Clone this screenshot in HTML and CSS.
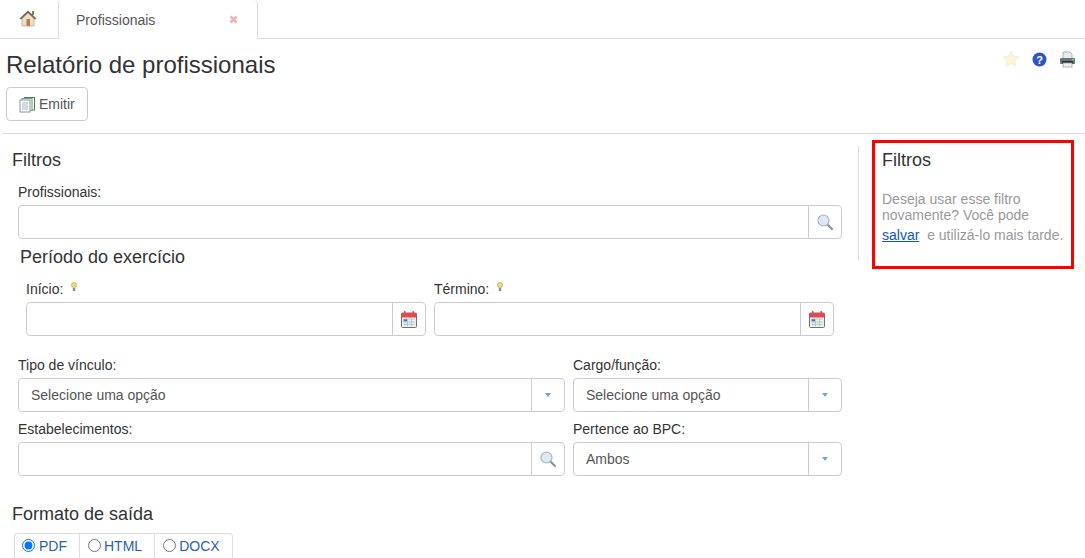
FILE: index.html
```html
<!DOCTYPE html>
<html lang="pt-BR">
<head>
  <meta charset="UTF-8" />
  <title>Relatório de profissionais</title>
  <link rel="stylesheet" href="styles.css">
</head>
<body>
  <div class="tabs">
    <a class="tab-home">
      <svg width="20" height="18" viewBox="0 0 20 18">
        <rect x="14" y="2" width="2" height="4" fill="#8d7b6c"/>
        <path d="M4 9.500 10 4l6 5.500V17H4z" fill="#efe0c8" stroke="#b8a48e" stroke-width=".8"/>
        <path d="M10 1.500 1.500 9.500 3 10.500 10 4l7 6.500 1.500-1z" fill="#77675a"/>
        <rect x="8.500" y="10" width="3.500" height="7" fill="#c07a48"/>
      </svg>
    </a>
    <div class="tab-active">
      <span>Profissionais</span>
      <svg width="9" height="9" viewBox="0 0 9 9">
        <path d="M1.500 1.500l6 6M7.500 1.500l-6 6" stroke="#e8b4b4" stroke-width="2.600"/>
      </svg>
    </div>
  </div>

  <header class="page-head">
    <div>
      <h1>Relatório de profissionais</h1>
      <button class="btn" type="button">
        <svg width="16" height="17" viewBox="0 0 16 17">
          <rect x="5.500" y="1.500" width="10" height="12.500" fill="#f4faf3" stroke="#3f8a4a"/>
          <rect x="3" y="2.500" width="10" height="12" fill="#f6f9f9" stroke="#7d9a8a"/>
          <rect x="1" y="4" width="10" height="12" fill="#fff" stroke="#8a9aa0"/>
          <path d="M3 7h6M3 9h6M3 11h6M3 13h6" stroke="#a9b8c0"/>
        </svg>
        Emitir
      </button>
    </div>
    <div class="head-icons">
      <svg width="18" height="18" viewBox="0 0 18 18">
        <path d="M9 1l2.400 5.300 5.600.6-4.200 3.800 1.200 5.700L9 13.500l-5 2.900 1.200-5.700L1 6.900l5.600-.6z" fill="#f9f5d6" stroke="#efe9c2" stroke-width=".6"/>
      </svg>
      <svg width="15" height="15" viewBox="0 0 15 15">
        <circle cx="7.500" cy="7.500" r="7" fill="#2f55c4"/>
        <text x="7.500" y="11.500" class="help-mark">?</text>
      </svg>
      <svg width="17" height="17" viewBox="0 0 17 17">
        <path d="M4 1h7l2 2v5H4z" fill="#e8ecec" stroke="#9aa4a8" stroke-width=".8"/>
        <rect x="1" y="7" width="15" height="6" rx="1" fill="#6d7478"/>
        <rect x="3" y="10" width="11" height="3" fill="#2b3034"/>
        <rect x="4" y="12" width="9" height="4" fill="#f1f4f4" stroke="#9aa4a8" stroke-width=".8"/>
        <rect x="13" y="8" width="2" height="1.500" fill="#6fd08a"/>
      </svg>
    </div>
  </header>

  <hr class="divider">

  <div class="content">
    <main class="filters">
      <h3>Filtros</h3>
      <div class="fields">
        <div class="field">
          <label>Profissionais:</label>
          <div class="input-group">
            <div class="control"></div>
            <span class="addon">
              <svg width="18" height="18" viewBox="0 0 18 18">
                <path d="M11 11l5 5" stroke="#8f9295" stroke-width="2.200" stroke-linecap="round"/>
                <circle cx="7.500" cy="7.500" r="5.500" fill="#dfe9f3" stroke="#aab3bb" stroke-width="1.200"/>
              </svg>
            </span>
          </div>
        </div>

        <h3 class="period-title">Período do exercício</h3>
        <div class="period">
          <div class="field">
            <label>Início: <svg class="bulb" width="6" height="10" viewBox="0 0 6 10"><circle cx="3" cy="3" r="2.600" fill="#f2d77a" stroke="#b9a45c" stroke-width=".6"/><rect x="1.800" y="6" width="2.400" height="3" fill="#8a8a80"/></svg></label>
            <div class="input-group">
              <div class="control"></div>
              <span class="addon">
                <svg width="16" height="17" viewBox="0 0 16 17">
                  <rect x=".5" y="2" width="15" height="14.500" rx="1" fill="#e8f0ee" stroke="#77706a"/>
                  <rect x=".5" y="2" width="15" height="4.500" rx="1" fill="#e5484d"/>
                  <rect x="3" y="0" width="1.500" height="4" fill="#c9565a"/>
                  <rect x="11.500" y="0" width="1.500" height="4" fill="#c9565a"/>
                  <rect x="2.500" y="8" width="3.500" height="2.500" fill="#4a78c8"/>
                  <path d="M6.500 8v7M10.500 8v7M2.500 11h11M2.500 13.500h11M2.500 8h11" stroke="#a9c2c4" stroke-width=".8"/>
                </svg>
              </span>
            </div>
          </div>
          <div class="field">
            <label>Término: <svg class="bulb" width="6" height="10" viewBox="0 0 6 10"><circle cx="3" cy="3" r="2.600" fill="#f2d77a" stroke="#b9a45c" stroke-width=".6"/><rect x="1.800" y="6" width="2.400" height="3" fill="#8a8a80"/></svg></label>
            <div class="input-group">
              <div class="control"></div>
              <span class="addon">
                <svg width="16" height="17" viewBox="0 0 16 17">
                  <rect x=".5" y="2" width="15" height="14.500" rx="1" fill="#e8f0ee" stroke="#77706a"/>
                  <rect x=".5" y="2" width="15" height="4.500" rx="1" fill="#e5484d"/>
                  <rect x="3" y="0" width="1.500" height="4" fill="#c9565a"/>
                  <rect x="11.500" y="0" width="1.500" height="4" fill="#c9565a"/>
                  <rect x="2.500" y="8" width="3.500" height="2.500" fill="#4a78c8"/>
                  <path d="M6.500 8v7M10.500 8v7M2.500 11h11M2.500 13.500h11M2.500 8h11" stroke="#a9c2c4" stroke-width=".8"/>
                </svg>
              </span>
            </div>
          </div>
        </div>

        <div class="select-grid">
          <div class="field">
            <label>Tipo de vínculo:</label>
            <div class="input-group">
              <div class="control">Selecione uma opção</div>
              <span class="addon"><i class="caret"></i></span>
            </div>
          </div>
          <div class="field">
            <label>Cargo/função:</label>
            <div class="input-group">
              <div class="control">Selecione uma opção</div>
              <span class="addon"><i class="caret"></i></span>
            </div>
          </div>
          <div class="field">
            <label>Estabelecimentos:</label>
            <div class="input-group">
              <div class="control"></div>
              <span class="addon">
                <svg width="18" height="18" viewBox="0 0 18 18">
                  <path d="M11 11l5 5" stroke="#8f9295" stroke-width="2.200" stroke-linecap="round"/>
                  <circle cx="7.500" cy="7.500" r="5.500" fill="#dfe9f3" stroke="#aab3bb" stroke-width="1.200"/>
                </svg>
              </span>
            </div>
          </div>
          <div class="field">
            <label>Pertence ao BPC:</label>
            <div class="input-group">
              <div class="control">Ambos</div>
              <span class="addon"><i class="caret"></i></span>
            </div>
          </div>
        </div>
      </div>

      <h3 class="output-title">Formato de saída</h3>
      <div class="radio-group">
        <label class="radio-item"><input type="radio" name="fmt" checked>PDF</label>
        <label class="radio-item"><input type="radio" name="fmt">HTML</label>
        <label class="radio-item"><input type="radio" name="fmt">DOCX</label>
      </div>
    </main>

    <div class="side-rule"></div>

    <aside class="save-box">
      <h3>Filtros</h3>
      <p>Deseja usar esse filtro novamente? Você pode</p>
      <p class="save-line"><a href="#">salvar</a> &nbsp;e utilizá-lo mais tarde.</p>
    </aside>
  </div>
</body>
</html>
```

FILE: styles.css
```css
html, body {
  height: 558px;
  overflow: hidden;
}
body {
  margin: 0;
  font-family: "Liberation Sans", Arial, sans-serif;
  font-size: 14px;
  color: #333;
  background: white;
}
h1, h3, p {
  margin: 0;
  font-weight: 400;
}

/* tabs */
.tabs {
  display: flex;
  height: 39px;
  box-sizing: border-box;
  border-bottom: 1px solid #ddd;
}
.tab-home {
  width: 58px;
  display: flex;
  justify-content: center;
  padding: 9px 2px 0 0;
  box-sizing: border-box;
}
.tab-active {
  width: 200px;
  height: 39px;
  box-sizing: border-box;
  padding: 0 19px 0 17px;
  display: flex;
  justify-content: space-between;
  align-items: center;
  background: white;
  border: 1px solid #ddd;
  border-top: 0;
  border-bottom: 0;
  border-radius: 4px 4px 0 0;
  color: #555;
  font-size: 14px;
}

/* title */
.page-head {
  display: flex;
  justify-content: space-between;
  padding: 12px 9px 0 6px;
}
h1 {
  font-size: 24px;
  line-height: 27px;
  color: #333;
}
.btn {
  display: flex;
  align-items: center;
  gap: 4px;
  margin-top: 9px;
  width: 82px;
  height: 34px;
  padding: 0 0 0 12px;
  background: white;
  border: 1px solid #ccc;
  border-radius: 4px;
  color: #555;
  font: 14px "Liberation Sans", Arial, sans-serif;
}
.head-icons {
  display: flex;
  gap: 12px;
  align-items: center;
  height: 18px;
  margin-top: -1px;
}
.help-mark {
  font: bold 11px "Liberation Sans", Arial, sans-serif;
  fill: white;
  text-anchor: middle;
}
.divider {
  margin: 12px 0 0 2px;
  border: 0;
  border-top: 1px solid #ddd;
}

/* main area */
.content {
  display: flex;
  align-items: flex-start;
}
.filters {
  width: 830px;
  margin-left: 12px;
  padding-top: 16px;
}
.filters h3, .save-box h3 {
  font-size: 18px;
  line-height: 20px;
  color: #333;
}
.fields {
  padding-left: 6px;
  margin-top: 10px;
}
.field label {
  display: block;
  height: 20px;
  line-height: 20px;
  font-size: 14px;
}
.bulb {
  margin-left: 4px;
  vertical-align: 2px;
}
.field {
  padding-top: 2px;
}
.input-group {
  display: flex;
  height: 34px;
  margin-top: 3px;
  box-sizing: border-box;
  border: 1px solid #ccc;
  border-radius: 4px;
}
.control {
  flex: 1;
  padding-left: 12px;
  line-height: 32px;
  color: #555;
}
.addon {
  width: 32px;
  display: flex;
  align-items: center;
  justify-content: center;
  border-left: 1px solid #ccc;
}
.caret {
  width: 0;
  height: 0;
  border-left: 3.5px solid transparent;
  border-right: 3.5px solid transparent;
  border-top: 4px solid #6aa9dc;
}
.filters .period-title {
  margin: 8px 0 0 2px;
}
.period {
  display: grid;
  grid-template-columns: 400px 400px;
  gap: 8px;
  padding-left: 8px;
  margin-top: 10px;
}
.select-grid {
  display: grid;
  grid-template-columns: 547px 269px;
  column-gap: 8px;
  row-gap: 5px;
  margin-top: 17px;
}
.filters .output-title {
  margin-top: 28px;
}
.radio-group {
  display: inline-flex;
  height: 26px;
  margin: 9px 0 0 2px;
  box-sizing: border-box;
  border: 1px solid #ddd;
  border-bottom: 0;
  border-radius: 4px 4px 0 0;
}
.radio-item {
  display: flex;
  align-items: center;
  gap: 3px;
  height: 24px;
  padding: 0 12px 2px 8px;
  border-left: 1px solid #ddd;
  color: #2a5fb0;
}
.radio-item:first-child {
  border-left: 0;
  padding-left: 7px;
  gap: 4px;
}
.radio-item input {
  margin: 0 0 2px;
  width: 13px;
  height: 13px;
}

/* right side */
.side-rule {
  width: 1px;
  height: 114px;
  margin: 12px 0 0 16px;
  background: #ddd;
}
.save-box {
  width: 202px;
  height: 129px;
  box-sizing: border-box;
  margin: 6px 0 0 13px;
  padding: 7px 7px 0 7px;
  border: 3px solid #f00;
  font-size: 14px;
  color: #999;
}
.save-box p {
  line-height: 16px;
}
.save-box h3 + p {
  margin-top: 21px;
}
.save-box .save-line {
  margin-top: 4px;
}
.save-box a {
  color: #1155cc;
  text-decoration: underline;
}
```
